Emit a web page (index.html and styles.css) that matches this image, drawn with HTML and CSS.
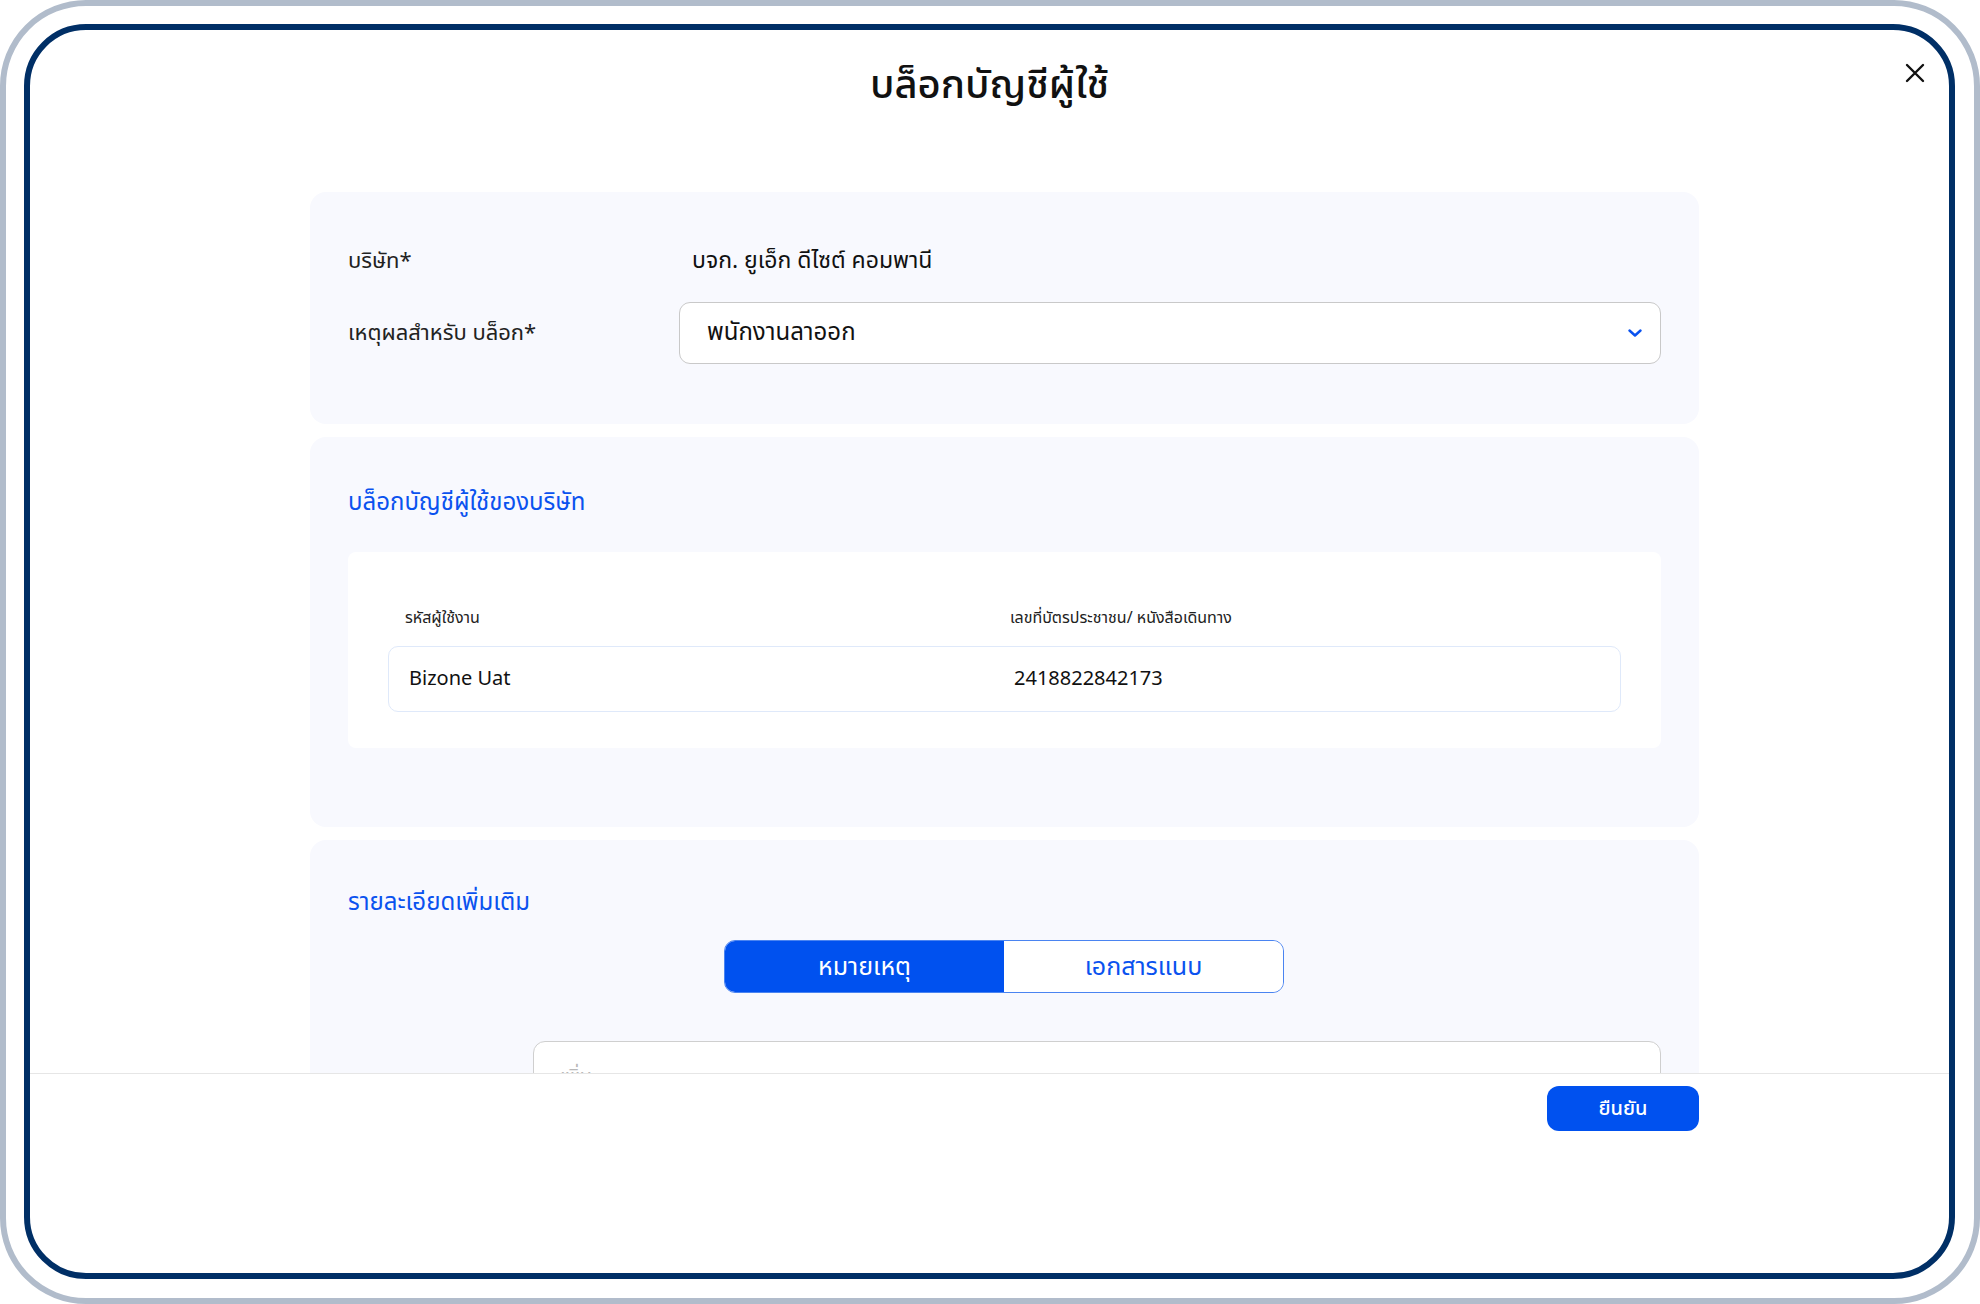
FILE: index.html
```html
<!DOCTYPE html>
<html lang="th">
<head>
<meta charset="utf-8">
<title>บล็อกบัญชีผู้ใช้</title>
<link rel="stylesheet" href="styles.css">
</head>
<body>
<div class="frame-outer">
  <div class="frame-inner">
    <div class="modal">
      <header class="modal-header">
        <h1 class="modal-title">บล็อกบัญชีผู้ใช้</h1>
        <button class="close-btn" aria-label="close">
          <svg viewBox="0 0 20 20" width="20" height="20"><path d="M2 2 L18 18 M18 2 L2 18" stroke="#111" stroke-width="2.4" stroke-linecap="round" fill="none"/></svg>
        </button>
      </header>
      <main class="modal-body">
        <section class="card card-form">
          <div class="form-row">
            <div class="form-label">บริษัท*</div>
            <div class="form-value">บจก. ยูเอ็ก ดีไซต์ คอมพานี</div>
          </div>
          <div class="form-row">
            <div class="form-label">เหตุผลสำหรับ บล็อก*</div>
            <div class="select">
              <span class="select-text">พนักงานลาออก</span>
              <svg class="chevron" viewBox="0 0 14 8" width="14" height="8"><path d="M1.5 1.5 L7 6.5 L12.5 1.5" stroke="#0a52ef" stroke-width="2.4" fill="none" stroke-linecap="round" stroke-linejoin="round"/></svg>
            </div>
          </div>
        </section>

        <section class="card card-users">
          <h2 class="card-heading">บล็อกบัญชีผู้ใช้ของบริษัท</h2>
          <div class="inner-card">
            <div class="table-head">
              <div>รหัสผู้ใช้งาน</div>
              <div>เลขที่บัตรประชาชน/ หนังสือเดินทาง</div>
            </div>
            <div class="table-row">
              <div>Bizone Uat</div>
              <div>2418822842173</div>
            </div>
          </div>
        </section>

        <section class="card card-details">
          <h2 class="card-heading">รายละเอียดเพิ่มเติม</h2>
          <div class="tabs">
            <div class="tab tab-active">หมายเหตุ</div>
            <div class="tab">เอกสารแนบ</div>
          </div>
          <div class="textarea">
            <span class="placeholder">เพิ่ม...</span>
          </div>
        </section>
      </main>
      <footer class="modal-footer">
        <button class="confirm-btn">ยืนยัน</button>
      </footer>
    </div>
  </div>
</div>
</body>
</html>
```

FILE: styles.css
```css
* { box-sizing: border-box; }
html, body { margin: 0; padding: 0; background: #ffffff; }
body {
  font-family: "Noto Sans Thai", "Noto Sans Thai UI", "Noto Sans", "DejaVu Sans", sans-serif;
  color: #111111;
}
.frame-outer {
  width: 1980px;
  height: 1304px;
  border: 6px solid #b1bccb;
  border-radius: 86px;
  padding: 18px 19px 19px 18px;
  background: #ffffff;
}
.frame-inner {
  width: 100%;
  height: 100%;
  border: 6px solid #002f66;
  border-radius: 62px;
  overflow: hidden;
  background: #ffffff;
}
.modal {
  height: 100%;
  display: flex;
  flex-direction: column;
  position: relative;
}
.modal-header {
  padding-top: 30px;
  height: 162px;
  flex: none;
}
.modal-title {
  margin: 0;
  text-align: center;
  font-size: 40px;
  line-height: 52px;
  font-weight: 500;
  color: #111;
}
.close-btn {
  position: absolute;
  top: 31px;
  right: 22px;
  width: 24px;
  height: 24px;
  padding: 0;
  border: 0;
  background: none;
  display: flex;
  align-items: center;
  justify-content: center;
}
.modal-body {
  flex: none;
  height: 881px;
  overflow: hidden;
  padding: 0 250px 0 280px;
  display: flex;
  flex-direction: column;
  gap: 13px;
}
.card {
  background: #f8f9fe;
  border-radius: 16px;
  padding: 0 38px;
  flex: none;
}
.card-form {
  padding-top: 46px;
  padding-bottom: 60px;
  display: flex;
  flex-direction: column;
  gap: 18px;
}
.form-row {
  display: flex;
  align-items: center;
  min-height: 46px;
}
.form-label {
  width: 331px;
  flex: none;
  font-size: 22px;
  color: #222;
}
.form-value {
  padding-left: 13px;
  font-size: 23px;
  color: #111;
}
.select {
  flex: 1;
  height: 62px;
  background: #fff;
  border: 1.5px solid #c9c9c9;
  border-radius: 11px;
  display: flex;
  align-items: center;
  justify-content: space-between;
  padding: 0 18px 0 27px;
}
.select-text { font-size: 24px; color: #111; }
.chevron { display: block; }
.card-heading {
  margin: 0;
  font-size: 24px;
  line-height: 34px;
  font-weight: 400;
  color: #0a52ef;
}
.card-users {
  padding-top: 49px;
  padding-bottom: 79px;
}
.inner-card {
  margin-top: 32px;
  background: #ffffff;
  border-radius: 8px;
  padding: 52px 40px 36px 40px;
}
.table-head, .table-row {
  display: grid;
  grid-template-columns: 605px 1fr;
}
.table-head {
  padding: 0 17px;
  font-size: 16px;
  line-height: 28px;
  color: #222;
  margin-bottom: 14px;
}
.table-row {
  height: 66px;
  align-items: center;
  padding: 0 20px;
  border: 1.5px solid #dfe9fa;
  border-radius: 10px;
  font-size: 20px;
  color: #111;
}
.card-details {
  padding-top: 46px;
  padding-bottom: 40px;
}
.tabs {
  margin: 20px 0 0 376px;
  width: 560px;
  height: 53px;
  display: flex;
  border-radius: 11px;
  overflow: hidden;
  border: 1.5px solid #4a84f1;
}
.tab {
  flex: 1;
  display: flex;
  align-items: center;
  justify-content: center;
  font-size: 25px;
  color: #0a52ef;
  background: #fff;
}
.tab-active {
  background: #0051ef;
  color: #fff;
}
.textarea {
  margin: 48px 0 0 185px;
  height: 140px;
  background: #fff;
  border: 1.5px solid #cfcfcf;
  border-radius: 12px;
  padding: 20px 26px;
}
.placeholder { color: #b8b8b8; font-size: 20px; }
.modal-footer {
  flex: 1;
  border-top: 1.5px solid #e6e6e6;
  padding: 12px 250px 0 0;
  display: flex;
  justify-content: flex-end;
  align-items: flex-start;
}
.confirm-btn {
  width: 152px;
  height: 45px;
  border: 0;
  border-radius: 12px;
  background: #0051ef;
  color: #fff;
  font-family: inherit;
  font-size: 20px;
  font-weight: 500;
}
```
